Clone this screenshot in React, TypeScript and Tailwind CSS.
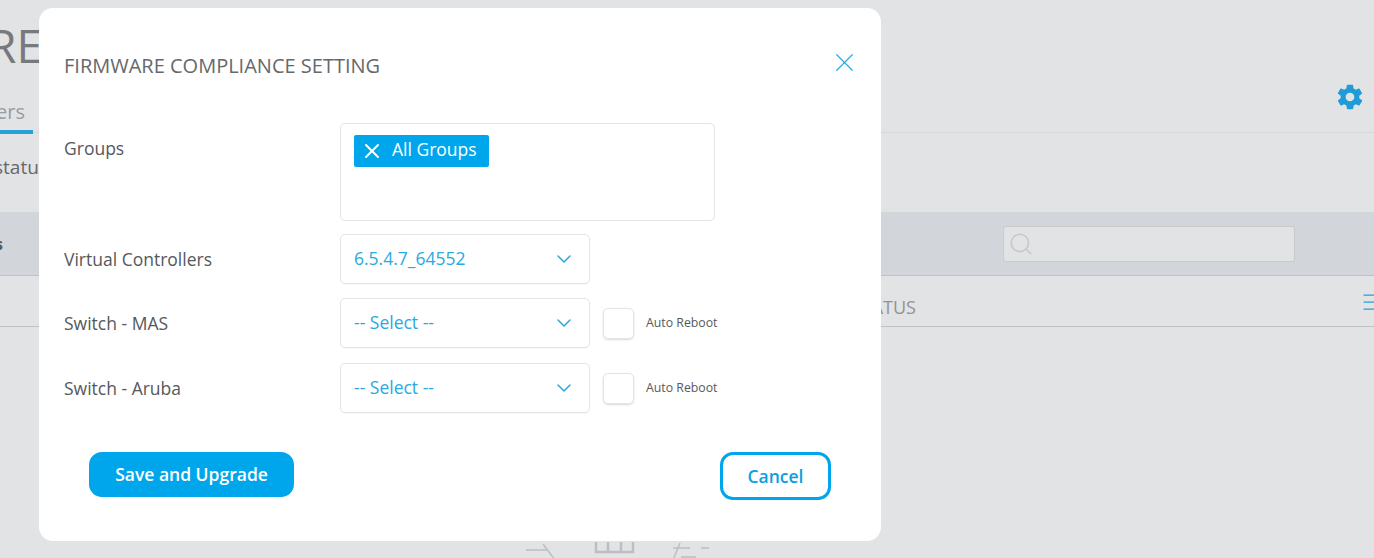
import { ChevronDown, Menu, Search, X } from 'lucide-react';
import { IoMdSettings } from 'react-icons/io';

const Select = ({ value }: { value: string }) => (
    <div className="w-[250px] h-[50px] border border-[#e4e4e4] rounded-[5px] pl-[13px] pr-[13px] flex items-center justify-between text-[#29a9e0] shadow-[0_1px_1px_rgba(0,0,0,0.03)]">
        <span className="text-[17.5px] -mt-px">{value}</span>
        <ChevronDown size={24} strokeWidth={1.5} className="text-[#29a9e0] -mt-px" />
    </div>
);

const AutoReboot = () => (
    <div className="flex items-center ml-[13px]">
        <div className="size-[31px] border border-[#e4e4e4] rounded-[5px] shadow-[0_1px_2px_rgba(0,0,0,0.15)]"></div>
        <span className="ml-[12px] text-[12.3px] text-[#55585c]">Auto Reboot</span>
    </div>
);

const Row = ({ label, value, reboot }: { label: string; value: string; reboot?: boolean }) => (
    <div className="flex items-center last:mt-px">
        <div className="w-[276px] text-[17.5px] text-[#55585c]">{label}</div>
        <Select value={value} />
        {reboot && <AutoReboot />}
    </div>
);

const App = () => {
    return (
        <div className="relative h-[558px] w-[1374px] overflow-hidden bg-[#e2e3e5] font-['Open_Sans',sans-serif]">
            {/* page behind the dialog */}
            <div className="relative h-[133px] border-b border-[#d6d8db]">
                <div className="pt-[17px] -ml-[12px] text-[46px] leading-[56px] text-[#77797c]">RE</div>
                <div className="mt-[24px] flex items-center justify-between">
                    <div className="w-[33px] h-[37px] overflow-hidden border-b-[4px] border-[#29a0d8] flex justify-end pr-[8px]">
                        <span className="text-[20px] leading-[30px] text-[#9a9c9f]">ers</span>
                    </div>
                </div>
                <IoMdSettings size={30} className="absolute right-[9px] top-[82px] text-[#1f9cd8]" />
            </div>
            <div className="h-[79px] pt-[21px] -ml-[6px] text-[19px] leading-[26px] text-[#66686b]">status</div>
            <div className="h-[64px] bg-[#d2d5d9] border-b border-[#bfc1c4] flex items-center justify-between pr-[79px]">
                <span className="-ml-[5px] text-[16px] font-bold text-[#55585c] pl-0">s</span>
                <div className="w-[292px] h-[36px] bg-[#e2e3e5] border border-[#c8cacd] rounded-[3px] flex items-center pl-[4px]">
                    <Search size={26} strokeWidth={1.5} className="text-[#c6c8cb]" />
                </div>
            </div>
            <div className="h-[51px] border-b border-[#bfc1c4] flex items-center justify-end pr-0">
                <span className="mr-[444px] mt-[12px] text-[18px] text-[#919396]">STATUS</span>
                <Menu size={24} strokeWidth={1.25} className="-mr-[10px] mt-[2px] text-[#29a0d8]" />
            </div>
            <div className="flex justify-center pt-[215px] pr-[134px]">
                <svg width="190" height="18" viewBox="0 0 190 18" fill="none" stroke="#bcbec1" strokeWidth="1.5">
                    <path d="M1 8h21M18 2l12 16" />
                    <path d="M71 0v10h37V0M83 0v10M96 0v10" strokeWidth="2.5" />
                    <path d="M148 6h17M176 6h8M155 1l-7 17M156 15h15" />
                </svg>
            </div>

            {/* dialog */}
            <div className="absolute left-[39px] top-[8px] w-[842px] h-[533px] bg-white rounded-[14px] pl-[25px] pr-[50px]">
                <div className="flex items-center justify-between h-[115px] pt-[1px]">
                    <h2 className="text-[20px] text-[#66686b]">FIRMWARE COMPLIANCE SETTING</h2>
                    <X size={31} strokeWidth={0.95} className="-mr-[29px] mb-[8px] text-[#29a9e0]" />
                </div>
                <div className="flex items-start h-[111px]">
                    <div className="w-[276px] pt-[12px] text-[17.5px] text-[#55585c]">Groups</div>
                    <div className="w-[375px] h-[98px] border border-[#e4e4e4] rounded-[5px] pl-[13px] pt-[11px]">
                        <span className="inline-flex items-center h-[32px] w-[135px] bg-[#00a6eb] rounded-[2px] pl-[6px] pb-[3px] text-white text-[17.5px]">
                            <X size={24} strokeWidth={1.9} className="mr-[8px] mt-[3px]" />
                            All Groups
                        </span>
                    </div>
                </div>
                <div className="flex flex-col gap-[14px]">
                    <Row label="Virtual Controllers" value="6.5.4.7_64552" />
                    <Row label="Switch - MAS" value="-- Select --" reboot />
                    <Row label="Switch - Aruba" value="-- Select --" reboot />
                </div>
                <div className="flex items-start justify-between mt-[39px] pl-[25px]">
                    <button className="w-[205px] h-[45px] rounded-[13px] bg-[#00a6eb] text-white text-[17.5px] font-semibold">
                        Save and Upgrade
                    </button>
                    <button className="w-[111px] h-[48px] rounded-[13px] border-[3px] border-[#00a6eb] text-[#0a9fe0] text-[17.5px] font-semibold">
                        Cancel
                    </button>
                </div>
            </div>
        </div>
    );
};

export default App;
